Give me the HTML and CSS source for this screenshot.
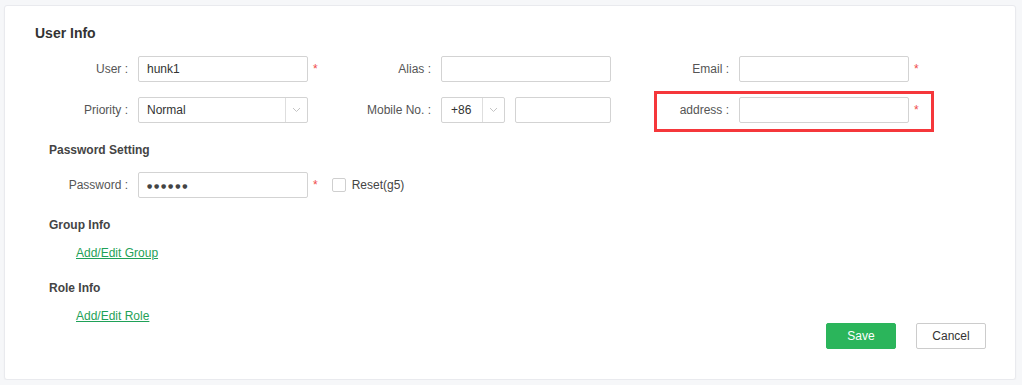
FILE: index.html
```html
<!DOCTYPE html>
<html>
<head>
<meta charset="utf-8">
<link rel="stylesheet" href="styles.css">
</head>
<body>
<div class="card">
  <h2 class="title">User Info</h2>
  <div class="row">
    <div class="field f1">
      <label class="lbl">User :</label>
      <input class="inp" type="text" value="hunk1">
      <span class="req">*</span>
    </div>
    <div class="field f2">
      <label class="lbl">Alias :</label>
      <input class="inp" type="text">
    </div>
    <div class="field f3">
      <label class="lbl">Email :</label>
      <input class="inp" type="text">
      <span class="req">*</span>
    </div>
  </div>
  <div class="row row2">
    <div class="field f1">
      <label class="lbl">Priority :</label>
      <div class="select sel-wide">
        <span class="val">Normal</span>
        <span class="arrow"><svg width="9" height="6" viewBox="0 0 9 6"><path d="M1 1l3.5 3.5L8 1" fill="none" stroke="#c4c4c4" stroke-width="1"/></svg></span>
      </div>
    </div>
    <div class="field f2">
      <label class="lbl">Mobile No. :</label>
      <div class="select sel-code">
        <span class="val">+86</span>
        <span class="arrow"><svg width="9" height="6" viewBox="0 0 9 6"><path d="M1 1l3.5 3.5L8 1" fill="none" stroke="#c4c4c4" stroke-width="1"/></svg></span>
      </div>
      <input class="inp inp-phone" type="text">
    </div>
    <div class="field f3 highlight">
      <label class="lbl">address :</label>
      <input class="inp" type="text">
      <span class="req">*</span>
    </div>
  </div>

  <h3 class="sub sub-pw">Password Setting</h3>
  <div class="row row-pw">
    <div class="field f1 f-auto">
      <label class="lbl">Password :</label>
      <div class="inp pw"><span class="dots">●●●●●●</span></div>
      <span class="req">*</span>
    </div>
    <label class="check"><span class="box"></span><span>Reset(g5)</span></label>
  </div>

  <h3 class="sub sub-group">Group Info</h3>
  <a class="link link-group" href="#">Add/Edit Group</a>

  <h3 class="sub sub-role">Role Info</h3>
  <a class="link link-role" href="#">Add/Edit Role</a>

  <div class="actions">
    <button class="btn btn-primary">Save</button>
    <button class="btn btn-default">Cancel</button>
  </div>
</div>
</body>
</html>
```
FILE: styles.css
```css
* { box-sizing: border-box; }

body {
  margin: 0;
  background: #f6f7f9;
  font-family: "Liberation Sans", Arial, sans-serif;
  font-size: 12px;
  color: #333;
}

.card {
  margin: 5px 6px 0 4px;
  width: 1012px;
  height: 375px;
  background: #fff;
  border: 1px solid #e9eaee;
  border-radius: 3px;
  box-shadow: 0 1px 2px rgba(0, 0, 0, 0.03);
  padding: 17px 29px 0 29px;
  display: flex;
  flex-direction: column;
  align-items: flex-start;
}

.title {
  margin: 0;
  font-size: 14px;
  font-weight: bold;
  line-height: 20px;
  color: #333;
  padding-left: 1px;
}

.row {
  display: flex;
  align-items: center;
  height: 26px;
  margin-top: 13px;
}

.row2 { margin-top: 15px; }

.field {
  display: flex;
  align-items: center;
  height: 26px;
}

.f1 { width: 307px; }
.f2 { width: 316px; }
.f3 { width: 274px; }
.f-auto { width: auto; }

.lbl {
  flex: none;
  text-align: right;
  line-height: 26px;
  color: #555;
  margin-right: 10px;
  white-space: nowrap;
}

.f1 .lbl { width: 94px; }
.f2 .lbl { width: 90px; }
.f3 .lbl { width: 72px; }

.inp {
  width: 170px;
  height: 26px;
  border: 1px solid #d3d3d3;
  border-radius: 2px;
  padding: 0 8px;
  font-family: inherit;
  font-size: 12px;
  color: #333;
  outline: none;
  background: #fff;
  flex: none;
}

.inp-phone {
  width: 96px;
  margin-left: 10px;
}

.req {
  color: #f04b4b;
  margin-left: 5px;
  line-height: 26px;
  font-size: 12px;
}

.select {
  display: flex;
  height: 26px;
  border: 1px solid #d3d3d3;
  border-radius: 2px;
  flex: none;
}

.sel-wide { width: 170px; }
.sel-code { width: 64px; }

.select .val {
  flex: 1;
  line-height: 24px;
  padding-left: 8px;
  color: #333;
}

.sel-code .val { padding-left: 9px; }

.select .arrow {
  width: 22px;
  border-left: 1px solid #dedede;
  display: flex;
  align-items: center;
  justify-content: center;
}

.highlight { position: relative; }
.highlight::after {
  content: "";
  position: absolute;
  top: -6px;
  left: -3px;
  right: -3px;
  bottom: -9px;
  border: 3px solid #f5373b;
  pointer-events: none;
}

.sub {
  margin: 0;
  font-size: 12px;
  font-weight: bold;
  line-height: 16px;
  color: #444;
  padding-left: 15px;
}

.sub-pw { margin-top: 19px; }
.row-pw { margin-top: 14px; }
.sub-group { margin-top: 19px; }
.sub-role { margin-top: 19px; }

.pw {
  display: flex;
  align-items: center;
}

.dots {
  font-family: "DejaVu Sans", sans-serif;
  font-size: 6px;
  letter-spacing: 1.8px;
  color: #444;
}

.check {
  display: flex;
  align-items: center;
  margin-left: 14px;
  color: #444;
}

.check .box {
  width: 14px;
  height: 14px;
  border: 1px solid #cfcfcf;
  border-radius: 2px;
  margin-right: 6px;
  background: #fff;
}

.link {
  display: block;
  margin-left: 42px;
  line-height: 16px;
  color: #1fa158;
  text-decoration: underline;
}

.link-group { margin-top: 12px; }
.link-role { margin-top: 12px; }

.actions {
  align-self: stretch;
  display: flex;
  justify-content: flex-end;
  gap: 20px;
  margin-top: -1px;
}

.btn {
  width: 70px;
  height: 26px;
  border-radius: 2px;
  font-family: inherit;
  font-size: 12px;
  cursor: pointer;
  padding: 0;
}

.btn-primary {
  background: #2bb55b;
  border: 1px solid #2bb55b;
  color: #fff;
}

.btn-default {
  background: #fff;
  border: 1px solid #cccccc;
  color: #333;
}
```
